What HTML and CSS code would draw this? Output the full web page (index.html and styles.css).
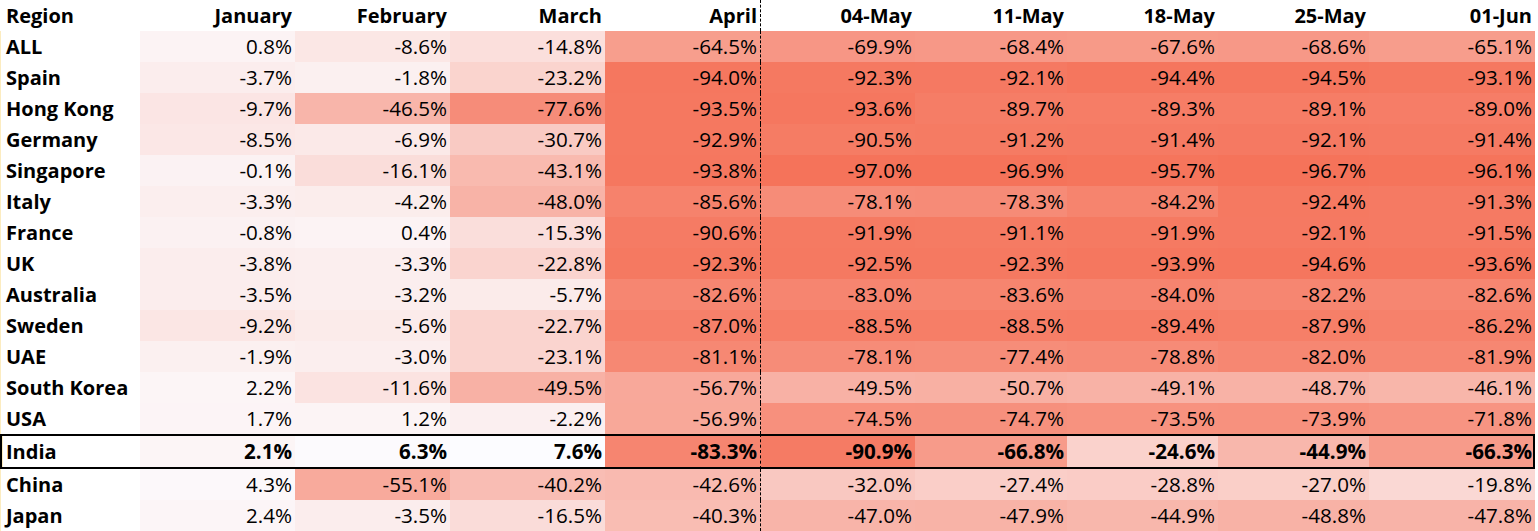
FILE: index.html
```html
<!DOCTYPE html>
<html>
<head>
<meta charset="utf-8">
<link rel="stylesheet" href="styles.css">
</head>
<body>
<table class="heat">
<colgroup>
<col class="w-region"><col class="w155"><col class="w155"><col class="w155"><col class="w156"><col class="w154"><col class="w152"><col class="w151"><col class="w151"><col class="w166">
</colgroup>
<thead>
<tr><th class="lbl">Region</th><th>January</th><th>February</th><th>March</th><th class="split">April</th><th>04-May</th><th>11-May</th><th>18-May</th><th>25-May</th><th>01-Jun</th></tr>
</thead>
<tbody>
<tr><td class="lbl">ALL</td><td>0.8%</td><td>-8.6%</td><td>-14.8%</td><td class="split">-64.5%</td><td>-69.9%</td><td>-68.4%</td><td>-67.6%</td><td>-68.6%</td><td>-65.1%</td></tr>
<tr><td class="lbl">Spain</td><td>-3.7%</td><td>-1.8%</td><td>-23.2%</td><td class="split">-94.0%</td><td>-92.3%</td><td>-92.1%</td><td>-94.4%</td><td>-94.5%</td><td>-93.1%</td></tr>
<tr><td class="lbl">Hong Kong</td><td>-9.7%</td><td>-46.5%</td><td>-77.6%</td><td class="split">-93.5%</td><td>-93.6%</td><td>-89.7%</td><td>-89.3%</td><td>-89.1%</td><td>-89.0%</td></tr>
<tr><td class="lbl">Germany</td><td>-8.5%</td><td>-6.9%</td><td>-30.7%</td><td class="split">-92.9%</td><td>-90.5%</td><td>-91.2%</td><td>-91.4%</td><td>-92.1%</td><td>-91.4%</td></tr>
<tr><td class="lbl">Singapore</td><td>-0.1%</td><td>-16.1%</td><td>-43.1%</td><td class="split">-93.8%</td><td>-97.0%</td><td>-96.9%</td><td>-95.7%</td><td>-96.7%</td><td>-96.1%</td></tr>
<tr><td class="lbl">Italy</td><td>-3.3%</td><td>-4.2%</td><td>-48.0%</td><td class="split">-85.6%</td><td>-78.1%</td><td>-78.3%</td><td>-84.2%</td><td>-92.4%</td><td>-91.3%</td></tr>
<tr><td class="lbl">France</td><td>-0.8%</td><td>0.4%</td><td>-15.3%</td><td class="split">-90.6%</td><td>-91.9%</td><td>-91.1%</td><td>-91.9%</td><td>-92.1%</td><td>-91.5%</td></tr>
<tr><td class="lbl">UK</td><td>-3.8%</td><td>-3.3%</td><td>-22.8%</td><td class="split">-92.3%</td><td>-92.5%</td><td>-92.3%</td><td>-93.9%</td><td>-94.6%</td><td>-93.6%</td></tr>
<tr><td class="lbl">Australia</td><td>-3.5%</td><td>-3.2%</td><td>-5.7%</td><td class="split">-82.6%</td><td>-83.0%</td><td>-83.6%</td><td>-84.0%</td><td>-82.2%</td><td>-82.6%</td></tr>
<tr><td class="lbl">Sweden</td><td>-9.2%</td><td>-5.6%</td><td>-22.7%</td><td class="split">-87.0%</td><td>-88.5%</td><td>-88.5%</td><td>-89.4%</td><td>-87.9%</td><td>-86.2%</td></tr>
<tr><td class="lbl">UAE</td><td>-1.9%</td><td>-3.0%</td><td>-23.1%</td><td class="split">-81.1%</td><td>-78.1%</td><td>-77.4%</td><td>-78.8%</td><td>-82.0%</td><td>-81.9%</td></tr>
<tr><td class="lbl">South Korea</td><td>2.2%</td><td>-11.6%</td><td>-49.5%</td><td class="split">-56.7%</td><td>-49.5%</td><td>-50.7%</td><td>-49.1%</td><td>-48.7%</td><td>-46.1%</td></tr>
<tr><td class="lbl">USA</td><td>1.7%</td><td>1.2%</td><td>-2.2%</td><td class="split">-56.9%</td><td>-74.5%</td><td>-74.7%</td><td>-73.5%</td><td>-73.9%</td><td>-71.8%</td></tr>
<tr class="focus"><td class="lbl">India</td><td>2.1%</td><td>6.3%</td><td>7.6%</td><td class="split">-83.3%</td><td>-90.9%</td><td>-66.8%</td><td>-24.6%</td><td>-44.9%</td><td>-66.3%</td></tr>
<tr><td class="lbl">China</td><td>4.3%</td><td>-55.1%</td><td>-40.2%</td><td class="split">-42.6%</td><td>-32.0%</td><td>-27.4%</td><td>-28.8%</td><td>-27.0%</td><td>-19.8%</td></tr>
<tr><td class="lbl">Japan</td><td>2.4%</td><td>-3.5%</td><td>-16.5%</td><td class="split">-40.3%</td><td>-47.0%</td><td>-47.9%</td><td>-44.9%</td><td>-48.8%</td><td>-47.8%</td></tr>
</tbody>
</table>
<script src="script.js"></script>
</body>
</html>
```

FILE: styles.css
```css
html, body {
  margin: 0;
  padding: 0;
  background: #fff;
}
body {
  font-family: "Open Sans", "Liberation Sans", sans-serif;
  font-size: 20px;
  color: #000;
}
.heat {
  border-collapse: separate;
  border-spacing: 0;
  table-layout: fixed;
  width: 1535px;
}
.w-region { width: 140px; }
.w155 { width: 155px; }
.w156 { width: 156px; }
.w154 { width: 154px; }
.w152 { width: 152px; }
.w151 { width: 151px; }
.w166 { width: 166px; }
.heat th,
.heat td {
  box-sizing: border-box;
  height: 31px;
  padding: 0 3px 0 0;
  text-align: right;
  white-space: nowrap;
  line-height: 31px;
  vertical-align: middle;
}
.heat td {
  font-size: 20.6px;
}
.heat th {
  font-weight: 700;
}
.heat .lbl {
  text-align: left;
  padding: 0 0 0 6px;
  font-size: 20px;
  font-weight: 700;
  background: #fff;
}
.heat tbody .lbl {
  box-shadow: inset 1px 0 0 #fcecc0;
}
.heat .split {
  border-right: 1px dashed #000;
}
.focus td {
  font-weight: 700;
  height: 35px;
  border-top: 2px solid #000;
  border-bottom: 2px solid #000;
}
.focus td:first-child {
  border-left: 2px solid #000;
  padding-left: 4px;
}
.focus td:last-child {
  border-right: 2px solid #000;
  padding-right: 1px;
}
```

FILE: script.js
```js
(function () {
  var max = 7.6, min = -97.0;
  var lo = [252, 252, 255], hi = [245, 115, 90];
  var cells = document.querySelectorAll('.heat tbody td:not(.lbl)');
  cells.forEach(function (c) {
    var v = parseFloat(c.textContent);
    var t = (max - v) / (max - min);
    if (t < 0) t = 0; if (t > 1) t = 1;
    var rgb = lo.map(function (a, i) { return Math.round(a + (hi[i] - a) * t); });
    c.style.backgroundColor = 'rgb(' + rgb.join(',') + ')';
  });
})();
```
